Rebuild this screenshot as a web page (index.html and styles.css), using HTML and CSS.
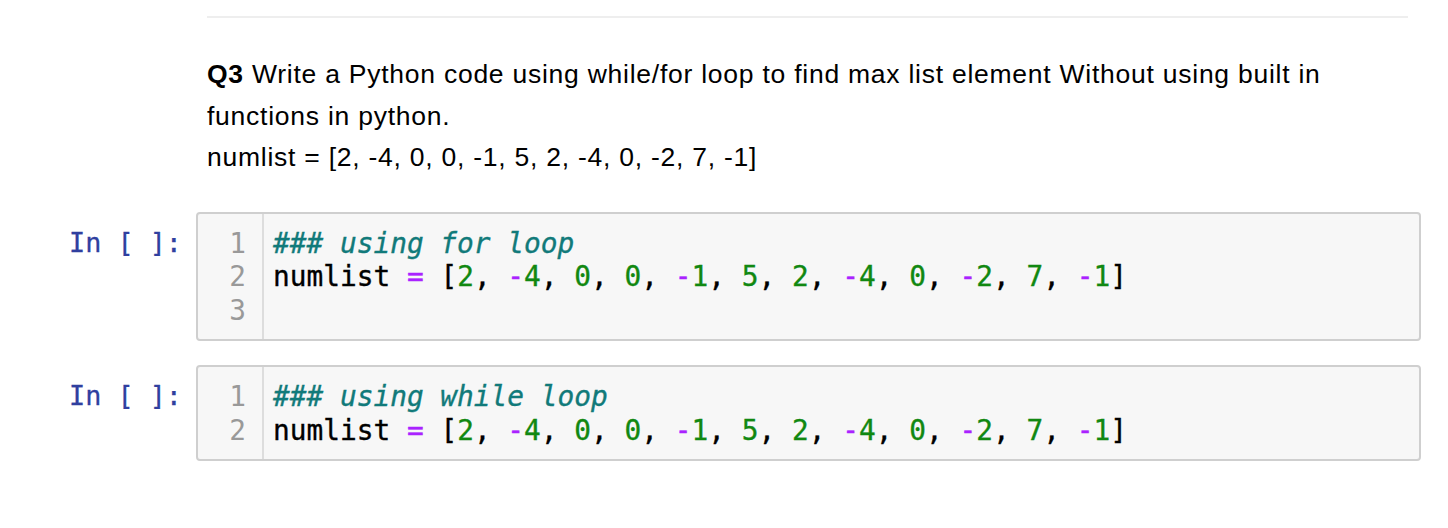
FILE: index.html
```html
<!DOCTYPE html>
<html>
<head>
<meta charset="utf-8">
<link rel="stylesheet" href="styles.css">
</head>
<body>
<div class="notebook">
  <div class="md-cell">
    <hr class="rule">
    <div class="md-text">
      <p><strong>Q3</strong> Write a Python code using while/for loop to find max list element Without using built in functions in python.<br>numlist = [2, -4, 0, 0, -1, 5, 2, -4, 0, -2, 7, -1]</p>
    </div>
  </div>

  <div class="code-cell">
    <div class="prompt">In&nbsp;[&nbsp;]:</div>
    <div class="editor">
      <div class="gutter"><div>1</div><div>2</div><div>3</div></div>
      <div class="lines">
        <div class="line"><span class="c">### using for loop</span></div>
        <div class="line">numlist <span class="o">=</span> [<span class="n">2</span>, <span class="o">-</span><span class="n">4</span>, <span class="n">0</span>, <span class="n">0</span>, <span class="o">-</span><span class="n">1</span>, <span class="n">5</span>, <span class="n">2</span>, <span class="o">-</span><span class="n">4</span>, <span class="n">0</span>, <span class="o">-</span><span class="n">2</span>, <span class="n">7</span>, <span class="o">-</span><span class="n">1</span>]</div>
        <div class="line">&nbsp;</div>
      </div>
    </div>
  </div>

  <div class="code-cell">
    <div class="prompt">In&nbsp;[&nbsp;]:</div>
    <div class="editor">
      <div class="gutter"><div>1</div><div>2</div></div>
      <div class="lines">
        <div class="line"><span class="c">### using while loop</span></div>
        <div class="line">numlist <span class="o">=</span> [<span class="n">2</span>, <span class="o">-</span><span class="n">4</span>, <span class="n">0</span>, <span class="n">0</span>, <span class="o">-</span><span class="n">1</span>, <span class="n">5</span>, <span class="n">2</span>, <span class="o">-</span><span class="n">4</span>, <span class="n">0</span>, <span class="o">-</span><span class="n">2</span>, <span class="n">7</span>, <span class="o">-</span><span class="n">1</span>]</div>
      </div>
    </div>
  </div>
</div>
</body>
</html>
```
FILE: styles.css
```css
html, body {
  margin: 0;
  padding: 0;
  background: #ffffff;
}

.notebook {
  width: 1448px;
  padding-top: 16px;
}

.md-cell {
  margin-left: 207px;
  width: 1201px;
}

.rule {
  margin: 0;
  border: 0;
  border-top: 2px solid #eeeeee;
  height: 0;
}

.md-text p {
  margin: 36px 0 0 0;
  width: 1140px;
  font-family: "Liberation Sans", Arial, sans-serif;
  font-size: 26.5px;
  letter-spacing: 0.75px;
  line-height: 41.5px;
  color: #000000;
}

.md-text strong {
  font-weight: bold;
}

.code-cell {
  display: flex;
  align-items: flex-start;
  margin-top: 33px;
  font-family: "DejaVu Sans Mono", "Liberation Mono", monospace;
}

.code-cell + .code-cell {
  margin-top: 24px;
}

.prompt {
  width: 196px;
  box-sizing: border-box;
  padding-right: 14px;
  padding-top: 14px;
  text-align: right;
  color: #303f9f;
  font-size: 26.8px;
  line-height: 33.5px;
  -webkit-text-stroke: 0.3px #303f9f;
}

.editor {
  display: flex;
  width: 1225px;
  box-sizing: border-box;
  border: 2px solid #cfcfcf;
  border-radius: 4px;
  background: #f7f7f7;
  font-size: 27.8px;
  line-height: 33.5px;
}

.gutter {
  width: 66px;
  box-sizing: border-box;
  padding: 13px 16px 12px 0;
  text-align: right;
  color: #999999;
  border-right: 2px solid #dddddd;
}

.lines {
  flex: 1;
  padding: 13px 0 12px 9px;
  color: #000000;
  -webkit-text-stroke: 0.35px currentColor;
}

.line {
  white-space: pre;
}

.c {
  color: #117a7a;
  font-style: italic;
}

.n {
  color: #118811;
}

.o {
  color: #aa22ff;
}
```
